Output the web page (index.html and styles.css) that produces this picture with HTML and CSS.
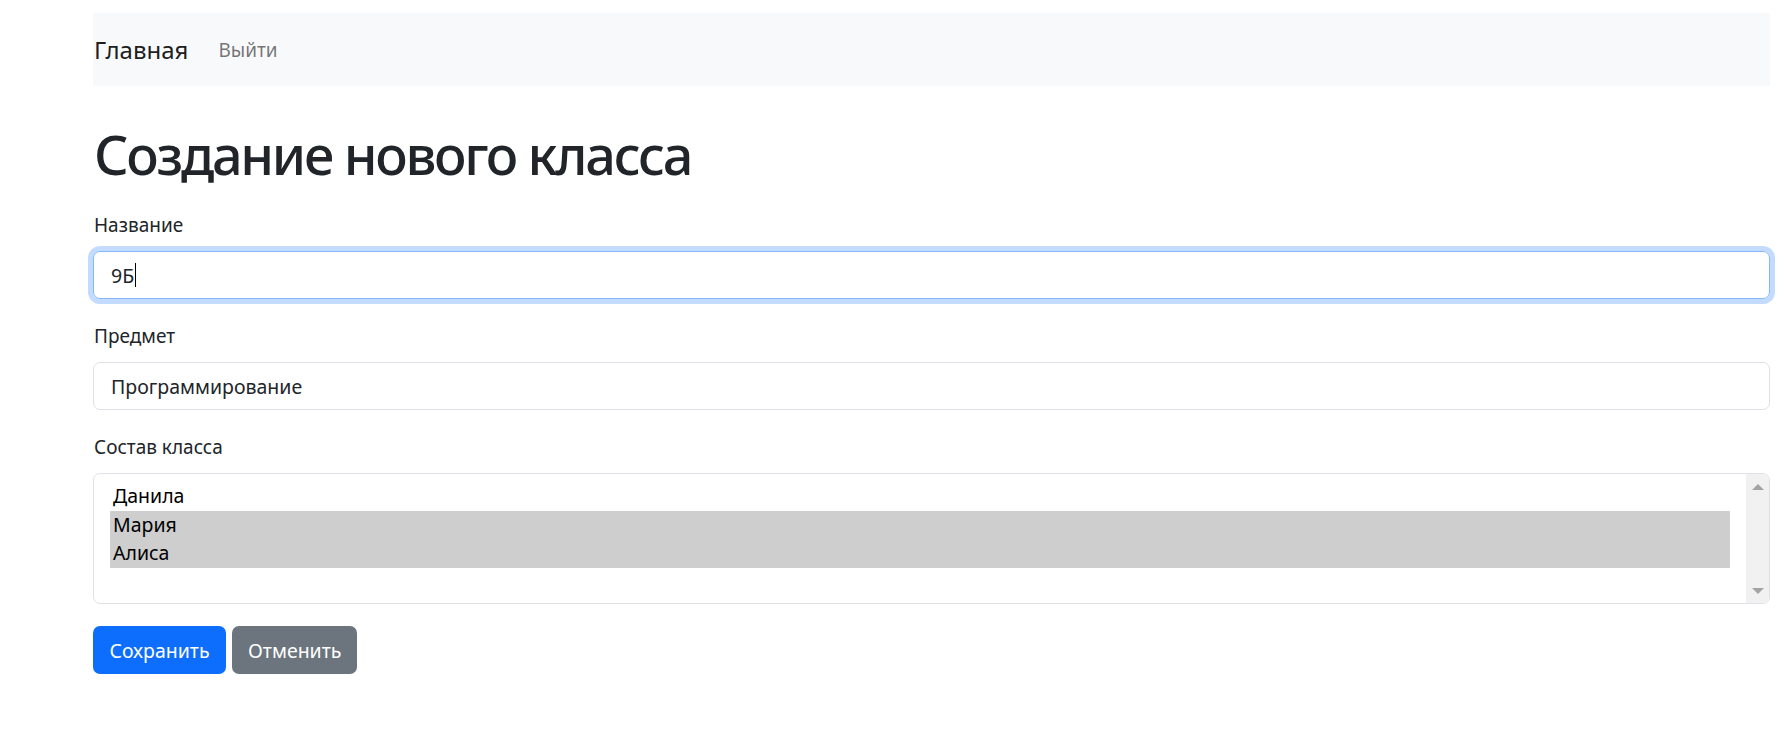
FILE: index.html
```html
<!DOCTYPE html>
<html lang="ru">
<head>
<meta charset="utf-8">
<title>Создание нового класса</title>
<link rel="stylesheet" href="styles.css">
</head>
<body>
<div class="page">
  <nav class="navbar">
    <a class="brand" href="#">Главная</a>
    <a class="nav-link" href="#">Выйти</a>
  </nav>
  <h1 class="title">Создание нового класса</h1>
  <form class="form">
    <div class="field">
      <label class="label">Название</label>
      <div class="input focused">9Б<span class="caret"></span></div>
    </div>
    <div class="field">
      <label class="label">Предмет</label>
      <div class="input">Программирование</div>
    </div>
    <div class="field field-list">
      <label class="label">Состав класса</label>
      <div class="listbox" role="listbox" aria-multiselectable="true">
        <div class="options">
          <div class="option" role="option">Данила</div>
          <div class="option selected" role="option" aria-selected="true">Мария</div>
          <div class="option selected" role="option" aria-selected="true">Алиса</div>
        </div>
        <div class="scrollbar">
          <span class="arrow up"></span>
          <span class="arrow down"></span>
        </div>
      </div>
    </div>
    <div class="actions">
      <button type="button" class="btn btn-primary">Сохранить</button>
      <button type="button" class="btn btn-secondary">Отменить</button>
    </div>
  </form>
</div>
</body>
</html>
```
FILE: styles.css
```css
* { box-sizing: border-box; }
html, body { margin: 0; padding: 0; background: #fff; }
body {
  font-family: "Noto Sans", "Open Sans", sans-serif;
  color: #212529;
  font-size: 20px;
}
.page {
  padding: 13px 21px 0 93px;
}
.navbar {
  height: 73px;
  background: #f8f9fa;
  display: flex;
  align-items: center;
  gap: 30px;
  padding-left: 1px;
}
.brand {
  font-size: 24px;
  color: rgba(0,0,0,.9);
  text-decoration: none;
}
.nav-link {
  font-size: 19px;
  color: rgba(0,0,0,.55);
  text-decoration: none;
}
.title {
  margin: 32px 0 0 0;
  font-size: 54px;
  font-weight: 500;
  letter-spacing: -2.3px;
  line-height: 72px;
  padding-left: 1px;
}
.form { margin-top: 20px; }
.field { margin-bottom: 22px; }
.label {
  display: block;
  font-size: 19px;
  line-height: 30px;
  margin-bottom: 11px;
  padding-left: 1px;
}
.input {
  height: 48px;
  border: 1px solid #dee2e6;
  border-radius: 7px;
  padding: 0 17px;
  display: flex;
  align-items: center;
  font-size: 19.5px;
}
.input.focused {
  border-color: #86b7fe;
  box-shadow: 0 0 0 5px #c2dbfe;
}
.caret {
  display: inline-block;
  width: 1px;
  height: 24px;
  background: #000;
  margin-left: 1px;
}
.field-list { margin-bottom: 22px; }
.listbox {
  height: 131px;
  border: 1px solid #dee2e6;
  border-radius: 7px;
  display: flex;
  overflow: hidden;
}
.options {
  flex: 1;
  padding: 8px 16px 0 16px;
}
.option {
  height: 28.5px;
  line-height: 28.5px;
  padding-left: 3px;
  font-size: 19.5px;
  color: #000;
}
.option.selected { background: #cecece; }
.scrollbar {
  width: 23px;
  background: #f1f1f1;
  display: flex;
  flex-direction: column;
  justify-content: space-between;
  align-items: center;
  padding: 10px 0 9px;
}
.arrow {
  width: 0; height: 0;
  border-left: 6px solid transparent;
  border-right: 6px solid transparent;
}
.arrow.up { border-bottom: 6px solid #a3a3a3; }
.arrow.down { border-top: 6px solid #a3a3a3; }
.actions { display: flex; gap: 6px; }
.btn {
  height: 48px;
  border: 0;
  border-radius: 7px;
  font-family: inherit;
  font-size: 19.5px;
  color: #fff;
  padding: 0 16px;
}
.btn-primary { background: #0d6efd; width: 133px; }
.btn-secondary { background: #6c757d; width: 125px; }
```
